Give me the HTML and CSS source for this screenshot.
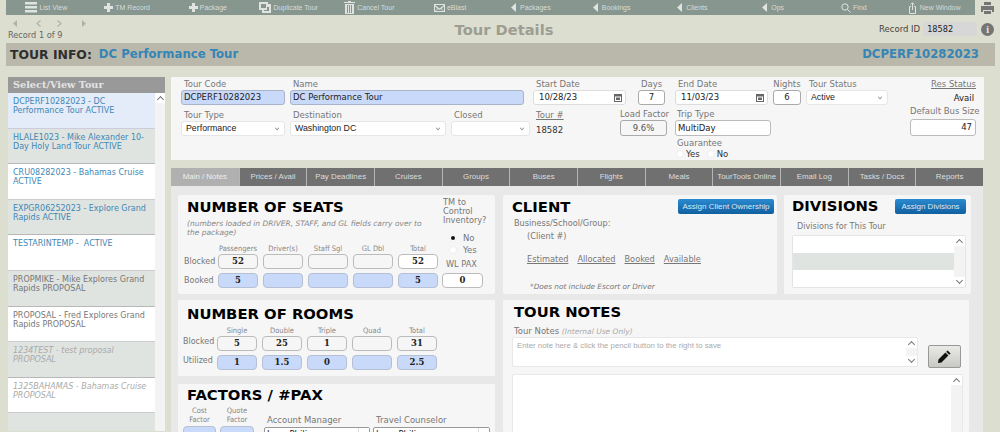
FILE: index.html
```html
<!DOCTYPE html>
<html lang="en">
<head>
<meta charset="utf-8">
<title>Tour Details</title>
<link rel="stylesheet" href="styles.css">
</head>
<body>
<div class="page">
  <div class="topstrip">
    <nav class="toolbar">
      <span class="tool"><svg class="ti" width="12" height="11" viewBox="0 0 12 11"><path d="M0 0h12v2.500H0zM0 4h12v2.500H0zM0 8h12v2.500H0z"/></svg>List View</span>
      <span class="tool"><svg class="ti" width="9" height="9" viewBox="0 0 9 9"><path d="M3 0h3v3h3v3H6v3H3V6H0V3h3z"/></svg>TM Record</span>
      <span class="tool"><svg class="ti" width="9" height="9" viewBox="0 0 9 9"><path d="M3 0h3v3h3v3H6v3H3V6H0V3h3z"/></svg>Package</span>
      <span class="tool"><svg class="ti" width="12" height="11" viewBox="0 0 12 11"><path d="M0 0h9v2h3v9H3V8H0zM2 2v4h5V2zM5 6v3h5V5H8v3H5z" fill-rule="evenodd"/></svg>Duplicate Tour</span>
      <span class="tool"><svg class="ti" width="11" height="13" viewBox="0 0 11 13"><path d="M4 0h3v1h4v1H0V1h4zM1 3h9v10H1zM3 4v8h1V4zM5 4v8h1V4zM7 4v8h1V4z" fill-rule="evenodd"/></svg>Cancel Tour</span>
      <span class="tool"><svg class="ti" width="11" height="8" viewBox="0 0 11 8"><path d="M0 0h11v8H0zM1 1l4.500 3.500L10 1zM1 2.500V7l2.500-2.500zM10 2.500L7.500 4.500 10 7zM4.300 5L1.500 7h8L6.700 5l-1.200 .9z" fill-rule="evenodd"/></svg>eBlast</span>
      <span class="tool tool-wide"><svg class="ti" width="5" height="9" viewBox="0 0 5 9"><path d="M5 0v9L0 4.500z"/></svg>Packages</span>
      <span class="tool tool-wide"><svg class="ti" width="5" height="9" viewBox="0 0 5 9"><path d="M5 0v9L0 4.500z"/></svg>Bookings</span>
      <span class="tool tool-wide"><svg class="ti" width="5" height="9" viewBox="0 0 5 9"><path d="M5 0v9L0 4.500z"/></svg>Clients</span>
      <span class="tool tool-wide"><svg class="ti" width="5" height="9" viewBox="0 0 5 9"><path d="M5 0v9L0 4.500z"/></svg>Ops</span>
      <span class="tool"><svg class="ti ti-line" width="10" height="10" viewBox="0 0 10 10"><circle cx="4" cy="4" r="3.200"/><path d="M6.500 6.500L9.500 9.500"/></svg>Find</span>
      <span class="tool tool-wide"><svg class="ti ti-line" width="7" height="12" viewBox="0 0 7 12"><path d="M2 4.500H.5v7h6v-7H5M3.500 8V.8M1.800 2.500L3.500 .8l1.700 1.700"/></svg>New Window</span>
    </nav>
    <div class="printer"><svg width="13" height="12" viewBox="0 0 13 12"><path fill="#757575" d="M3 0h7v3H3zM0 4h13v6h-2V8H2v2H0zM3 9h7v3H3z"/></svg></div>
  </div>

  <header class="recordbar">
    <div class="recordnav">
      <div class="arrows">
        <svg width="4" height="7" viewBox="0 0 4 7"><path d="M4 0v7L0 3.500z"/></svg>
        <svg class="chev" width="5" height="7" viewBox="0 0 5 7"><path d="M4.500 .5L1 3.500l3.500 3"/></svg>
        <svg class="chev" width="5" height="7" viewBox="0 0 5 7"><path d="M.5 .5L4 3.500l-3.500 3"/></svg>
        <svg width="4" height="7" viewBox="0 0 4 7"><path d="M0 0v7l4-3.500z"/></svg>
      </div>
      <div class="reccount">Record 1 of 9</div>
    </div>
    <h1 class="pagetitle">Tour Details</h1>
    <div class="recordid">
      <span class="recid-label">Record ID</span>
      <span class="recid-val">18582</span>
      <span class="info">i</span>
    </div>
  </header>

  <div class="titlebar">
    <span class="ti-label">TOUR INFO:</span>
    <span class="ti-name">DC Performance Tour</span>
    <span class="ti-code">DCPERF10282023</span>
  </div>

  <div class="body">
    <aside class="sidebar">
      <div class="side-head">Select/View Tour</div>
      <div class="side-list">
        <ul class="tours">
          <li class="tour cur blue">DCPERF10282023 - DC Performance Tour ACTIVE</li>
          <li class="tour alt blue">HLALE1023 - Mike Alexander 10-Day Holy Land Tour ACTIVE</li>
          <li class="tour blue">CRU08282023 - Bahamas Cruise ACTIVE</li>
          <li class="tour alt blue">EXPGR06252023 - Explore Grand Rapids ACTIVE</li>
          <li class="tour blue">TESTARINTEMP - &nbsp;ACTIVE</li>
          <li class="tour alt grey">PROPMIKE - Mike Explores Grand Rapids PROPOSAL</li>
          <li class="tour grey">PROPOSAL - Fred Explores Grand Rapids PROPOSAL</li>
          <li class="tour alt faint">1234TEST - test proposal PROPOSAL</li>
          <li class="tour faint">1325BAHAMAS - Bahamas Cruise PROPOSAL</li>
          <li class="tour alt"></li>
        </ul>
        <div class="sb sb-side"><span class="sb-btn"></span></div>
      </div>
    </aside>

    <main class="main">
      <section class="info-panel">
        <div class="irow irow-1">
          <div class="f w-code"><label class="lbl ind">Tour Code</label><div class="inp req">DCPERF10282023</div></div>
          <div class="f w-name"><label class="lbl ind">Name</label><div class="inp req">DC Performance Tour</div></div>
          <div class="f w-date w-start"><label class="lbl ind">Start Date</label><div class="inp date">10/28/23<svg class="cal" width="8" height="8" viewBox="0 0 8 8"><path d="M0 0h8v8H0zM1 2.500V7h6V2.500zM2 3.500h4V6H2z" fill="#666" fill-rule="evenodd"/></svg></div></div>
          <div class="f w-days"><label class="lbl ctr">Days</label><div class="inp num">7</div></div>
          <div class="f w-date"><label class="lbl ind">End Date</label><div class="inp date">11/03/23<svg class="cal" width="8" height="8" viewBox="0 0 8 8"><path d="M0 0h8v8H0zM1 2.500V7h6V2.500zM2 3.500h4V6H2z" fill="#666" fill-rule="evenodd"/></svg></div></div>
          <div class="f w-nights"><label class="lbl ctr">Nights</label><div class="inp num">6</div></div>
          <div class="f w-status"><label class="lbl ind">Tour Status</label><div class="inp sel">Active<span class="caret"></span></div></div>
          <div class="f w-res"><span class="lbl link">Res Status</span><div class="res-val">Avail</div></div>
        </div>
        <div class="irow irow-2">
          <div class="f w-code"><label class="lbl ind">Tour Type</label><div class="inp sel">Performance<span class="caret"></span></div></div>
          <div class="f w-dest"><label class="lbl ind">Destination</label><div class="inp sel">Washington DC<span class="caret"></span></div></div>
          <div class="f w-closed"><label class="lbl ind">Closed</label><div class="inp sel"><span class="caret"></span></div></div>
          <div class="f w-tnum"><span class="lbl link">Tour #</span><div class="tnum">18582</div></div>
          <div class="f w-load"><label class="lbl ctr">Load Factor</label><div class="inp num flat">9.6%</div></div>
          <div class="f w-trip">
            <label class="lbl ind">Trip Type</label><div class="inp">MultiDay</div>
            <label class="lbl ind guar">Guarantee</label>
            <div class="radios"><span class="radio"></span>Yes<span class="radio radio-2"></span>No</div>
          </div>
          <div class="f w-bus"><label class="lbl rt">Default Bus Size</label><div class="inp rnum">47</div></div>
        </div>
      </section>

      <nav class="tabs">
        <span class="tab on">Main / Notes</span><span class="tab">Prices / Avail</span><span class="tab">Pay Deadlines</span><span class="tab">Cruises</span><span class="tab">Groups</span><span class="tab">Buses</span><span class="tab">Flights</span><span class="tab">Meals</span><span class="tab">TourTools Online</span><span class="tab">Email Log</span><span class="tab">Tasks / Docs</span><span class="tab">Reports</span>
      </nav>

      <div class="content">
        <div class="col-left">
          <section class="card seats">
            <div class="seats-top">
              <div class="seats-intro">
                <h2 class="h">NUMBER OF SEATS</h2>
                <p class="note">(numbers loaded in DRIVER, STAFF, and GL fields carry over to the package)</p>
              </div>
              <div class="tm">TM to Control Inventory?</div>
            </div>
            <div class="seat-lower">
              <div class="matrix">
                <span></span><span class="ch">Passengers</span><span class="ch">Driver(s)</span><span class="ch">Staff Sgl</span><span class="ch">GL Dbl</span><span class="ch">Total</span>
                <span class="rh">Blocked</span><span class="box">52</span><span class="box"></span><span class="box"></span><span class="box"></span><span class="box white">52</span>
                <span class="rh">Booked</span><span class="box fill">5</span><span class="box fill"></span><span class="box fill"></span><span class="box fill"></span><span class="box fill">5</span>
              </div>
              <div class="tmside">
                <div class="rad-line"><span class="radio sel-r"></span>No</div>
                <div class="rad-line"><span class="radio"></span>Yes</div>
                <div class="wl">WL PAX</div>
                <span class="box white wlbox">0</span>
              </div>
            </div>
          </section>

          <section class="card rooms">
            <h2 class="h">NUMBER OF ROOMS</h2>
            <div class="matrix matrix-rooms">
              <span></span><span class="ch">Single</span><span class="ch">Double</span><span class="ch">Triple</span><span class="ch">Quad</span><span class="ch">Total</span>
              <span class="rh">Blocked</span><span class="box">5</span><span class="box">25</span><span class="box">1</span><span class="box"></span><span class="box">31</span>
              <span class="rh">Utilized</span><span class="box fill">1</span><span class="box fill">1.5</span><span class="box fill">0</span><span class="box fill"></span><span class="box fill">2.5</span>
            </div>
          </section>

          <section class="card factors">
            <h2 class="h">FACTORS / #PAX</h2>
            <div class="fact-row">
              <div class="fact"><span class="ch2">Cost Factor</span><span class="box fill fbox"></span></div>
              <div class="fact fact-2"><span class="ch2">Quote Factor</span><span class="box fill fbox"></span></div>
              <div class="staff staff-am"><label class="lbl ind">Account Manager</label><div class="inp staffsel">Lynn Philips<span class="sbtn"></span></div></div>
              <div class="staff staff-tc"><label class="lbl ind">Travel Counselor</label><div class="inp staffsel">Lynn Philips<span class="sbtn"></span></div></div>
            </div>
          </section>
        </div>

        <div class="col-right">
          <div class="top-right">
            <section class="card client">
              <div class="cl-head"><h2 class="h">CLIENT</h2><span class="btn btn-client">Assign Client Ownership</span></div>
              <div class="cl-l1">Business/School/Group:</div>
              <div class="cl-l2">(Client #)</div>
              <div class="cl-links"><span>Estimated</span><span>Allocated</span><span>Booked</span><span>Available</span></div>
              <div class="cl-note">*Does not include Escort or Driver</div>
            </section>
            <section class="card divisions">
              <div class="cl-head"><h2 class="h">DIVISIONS</h2><span class="btn btn-div">Assign Divisions</span></div>
              <div class="div-lbl">Divisions for This Tour</div>
              <div class="div-list">
                <div class="div-rows"><div class="div-row"></div><div class="div-row alt2"></div><div class="div-row"></div></div>
                <div class="sb sb-v"><span class="sb-btn"></span><span class="sb-btn dn"></span></div>
              </div>
            </section>
          </div>
          <section class="card notes">
            <h2 class="h">TOUR NOTES</h2>
            <div class="notes-lbl">Tour Notes <em>(Internal Use Only)</em></div>
            <div class="note-entry">
              <div class="note-box">
                <span class="note-ph">Enter note here &amp; click the pencil button to the right to save</span>
                <div class="sb sb-v"><span class="sb-btn"></span><span class="sb-btn dn"></span></div>
              </div>
              <span class="pencil"><svg width="13" height="13" viewBox="0 0 13 13"><path fill="#111" d="M9.600 .4l3 3-1.400 1.400-3-3zM7.400 2.600l3 3-6.900 6.900L0 13l.5-3.500z"/></svg></span>
            </div>
            <div class="note-log">
              <div class="sb sb-log"><span class="sb-btn"></span></div>
            </div>
          </section>
        </div>
      </div>
    </main>
  </div>
</div>
</body>
</html>
```

FILE: styles.css
```css
* { box-sizing: border-box; }
html, body { margin: 0; padding: 0; height: 432px; overflow: hidden; }
body { background: #dcdecf; font-family: "DejaVu Sans", Verdana, sans-serif; font-size: 9px; color: #333; }
.page { width: 1000px; height: 432px; overflow: hidden; }

/* top toolbar */
.topstrip { display: flex; height: 15px; padding-left: 6px; }
.toolbar { width: 969px; background: #87968f; display: grid; grid-template-columns: repeat(12, 1fr); }
.tool { display: flex; align-items: center; justify-content: center; gap: 2px; color: #d5dcd8; font-family: "Liberation Sans", Arial, sans-serif; font-size: 7px; white-space: nowrap; }
.tool-wide { gap: 4px; }
.ti { fill: #dfe4e0; flex: none; }
.ti-line { fill: none; stroke: #dfe4e0; stroke-width: 1; }
.printer { width: 25px; display: flex; align-items: center; justify-content: center; }

/* record row */
.recordbar { height: 28px; display: flex; align-items: flex-start; }
.recordnav { width: 120px; padding-left: 8px; }
.arrows { display: flex; padding: 5px 0 0 5px; height: 14px; }
.arrows svg { fill: #b0b2a6; margin-right: 19px; flex: none; }
.arrows .chev { fill: none; stroke: #b0b2a6; stroke-width: 1.200; margin-right: 16px; }
.arrows .chev + .chev { margin-right: 20px; }
.reccount { color: #666; font-size: 8.200px; line-height: 12px; }
.pagetitle { flex: 1; margin: 6px 0 0; text-align: center; color: #9d9d92; font-size: 14.700px; line-height: 18px; font-weight: bold; padding-left: 9px; }
.recordid { display: flex; align-items: center; width: 121px; margin-top: 7px; height: 14px; }
.recid-label { color: #444; font-size: 8.500px; margin-right: 3px; white-space: nowrap; }
.recid-val { width: 54px; height: 14px; background: #d7d7d7; border-radius: 2px; font-size: 8.200px; color: #222; padding: 2px 4px; line-height: 11px; margin-right: 4px; flex: none; }
.info { width: 13px; height: 13px; border-radius: 50%; background: #757575; color: #e8e8e0; font: bold 10px/13px "Liberation Serif", serif; text-align: center; flex: none; }

/* title bar */
.titlebar { margin-left: 6px; width: 989px; height: 23px; background: #b9b8aa; display: flex; align-items: center; padding: 0 4px 1px; font-weight: bold; font-size: 11.700px; }
.ti-label { color: #2e2e2e; margin-right: 7px; font-size: 12.400px; }
.ti-name { color: #3585b5; }
.ti-code { color: #3585b5; margin-left: auto; margin-right: 12px; }

/* body */
.body { display: flex; padding: 11px 0 0 8px; }
.sidebar { width: 157px; flex: none; margin-right: 6px; }
.side-head { height: 16px; background: #999; color: #e4e4e4; font-family: "DejaVu Serif", serif; font-weight: bold; font-size: 9.700px; line-height: 16px; padding-left: 5px; }
.side-list { display: flex; height: 338px; overflow: hidden; }
.tours { list-style: none; margin: 0; padding: 0; width: 147px; flex: none; }
.tour { height: 35.600px; padding: 4px 4px 0 5px; font-size: 8px; line-height: 9px; background: #fff; border-bottom: 1px solid #ccc; }
.tour.alt { background: #dfe4e1; border-bottom-color: #b8b8b8; }
.tour.cur { background: #e3ecf8; border-bottom-color: #ccd; }
.blue { color: #3f87b5; }
.grey { color: #777; }
.faint { color: #aaa; font-style: italic; }
.sb { background: #f3f3f3; flex: none; display: flex; flex-direction: column; justify-content: space-between; }
.sb-side { width: 10px; justify-content: flex-start; }
.sb-btn { height: 10px; background: #fff; display: flex; justify-content: center; align-items: center; }
.sb-btn::before { content: ""; width: 4px; height: 4px; border-left: 1px solid #777; border-top: 1px solid #777; transform: translateY(1px) rotate(45deg); }
.sb-btn.dn { transform: scaleY(-1); }

.main { width: 813px; flex: none; }

/* info panel */
.info-panel { height: 83px; background: #f6f6f6; padding: 2px 8px 0 10px; width: 813px; }
.irow { display: flex; align-items: flex-start; }
.irow-1 { height: 32px; }
.f { flex: none; }
.lbl { display: block; color: #777; font-size: 8.500px; line-height: 11px; white-space: nowrap; }
.lbl.ind { padding-left: 3px; }
.lbl.ctr { text-align: center; }
.lbl.rt { text-align: right; }
.lbl.link { text-decoration: underline; }
.inp { display: block; height: 15px; background: #fff; border: 1px solid #ccc; border-radius: 3px; font-size: 8.500px; line-height: 13px; color: #222; padding: 0 2px; position: relative; white-space: nowrap; overflow: hidden; }
.inp.req { background: #c9d9fa; border-color: #a9b4c8; }
.inp.sel { border-color: #e6e6e6; font-family: "Liberation Sans", Arial, sans-serif; font-size: 8.800px; padding-left: 4px; }
.caret { position: absolute; right: 5px; top: 4px; width: 4px; height: 4px; border-right: 1px solid #888; border-bottom: 1px solid #888; transform: rotate(45deg) scale(.8); }
.inp.date { padding-left: 5px; border-color: #ddd; }
.cal { position: absolute; right: 3px; top: 3px; }
.inp.num { text-align: center; border-color: #aaa; }
.inp.flat { height: 16px; background: #f6f6f6; color: #555; line-height: 14px; }
.inp.rnum { text-align: right; height: 17px; border-color: #bbb; line-height: 15px; padding-right: 3px; }

.w-code { width: 104px; margin-right: 5px; }
.w-name { width: 234px; margin-right: 9px; }
.w-date { width: 93px; }
.w-start { margin-right: 12px; }
.w-days { width: 27px; margin-right: 10px; }
.w-nights { width: 28px; margin: 0 5px; }
.w-status { width: 82px; }
.w-res { margin-left: auto; text-align: right; width: 70px; }
.res-val { color: #222; font-size: 8.500px; padding-top: 3px; padding-right: 2px; }
.irow-2 { height: 49px; margin-top: -1px; }
.w-dest { width: 156px; margin-right: 5px; }
.w-closed { width: 79px; margin-right: 6px; }
.w-tnum { width: 84px; }
.tnum { color: #333; font-size: 8.500px; padding-top: 4px; }
.w-load { width: 47px; margin-right: 8px; margin-top: -1px; }
.w-trip { width: 96px; margin-top: -1px; }
.w-trip .inp { height: 16px; line-height: 14px; border-color: #bbb; }
.w-trip .lbl.ind { padding-left: 2px; }
.w-bus { width: 66px; margin-left: auto; margin-top: -4px; }
.w-bus .lbl { margin-bottom: 2px; }
.guar { margin-top: 2px; }
.radios { display: flex; align-items: center; font-size: 8.500px; color: #333; padding-left: 1px; line-height: 10px; }
.radio { width: 8px; height: 8px; border-radius: 50%; background: #fff; border: 1px solid #eee; margin-right: 2px; flex: none; }
.radio-2 { margin-left: 7px; }
.sel-r { background: #111; border: 2px solid #fff; outline: 1px solid #eee; outline-offset: -1px; }

/* tabs */
.tabs { display: grid; grid-template-columns: repeat(12, 1fr); margin-top: 8px; height: 18px; width: 812px; }
.tab { background: #707070; color: #ddd; text-align: center; font-family: "Liberation Sans", Arial, sans-serif; font-size: 7.900px; line-height: 18px; border-left: 1px solid #b5b5b5; white-space: nowrap; overflow: hidden; }
.tab.on { background: #b0b0b0; color: #eee; border-left: 0; }

/* content */
.content { background: #e8e8e8; width: 812px; height: 246px; padding: 9px 0 0 7px; display: flex; gap: 8px; overflow: hidden; }
.col-left { width: 317px; flex: none; display: flex; flex-direction: column; gap: 6px; }
.col-right { width: 468px; flex: none; display: flex; flex-direction: column; gap: 6px; }
.card { background: #f6f6f6; border-radius: 2px; flex: none; }
.h { margin: 0; color: #000; font-size: 14.800px; line-height: 16px; font-weight: bold; white-space: nowrap; }

.seats { height: 99px; padding: 4px 5px 0 6px; }
.seats-top { display: flex; height: 44px; }
.seats-intro { width: 258px; padding: 0 18px 0 3px; }
.note { margin: 4px 0 0; color: #888; font-style: italic; font-size: 7.500px; line-height: 9px; }
.tm { width: 46px; padding-left: 1px; color: #777; font-size: 8.200px; line-height: 9px; margin-top: -1px; }
.seat-lower { display: flex; }
.matrix { display: grid; grid-template-columns: 29px repeat(5, 40px); column-gap: 5px; grid-template-rows: 11px 18.500px 15px; width: 254px; flex: none; }
.ch { text-align: center; color: #888; font-family: "DejaVu Sans Condensed", "DejaVu Sans", sans-serif; font-size: 7.500px; line-height: 11px; white-space: nowrap; }
.rh { color: #777; font-size: 8px; line-height: 15px; white-space: nowrap; }
.box { height: 15px; background: #f6f6f6; border: 1px solid #bbb; border-radius: 4px; text-align: center; color: #222; font-family: "DejaVu Serif", serif; font-weight: bold; font-size: 8.500px; line-height: 13px; display: block; }
.box.white { background: #fff; }
.box.fill { background: #c9d9fa; border-color: #b5c0d5; }
.tmside { margin-left: 4px; width: 41px; margin-top: -11px; }
.rad-line { display: flex; align-items: center; padding-left: 7px; color: #777; font-size: 8.500px; height: 12px; }
.rad-line .radio { margin-right: 6px; }
.wl { color: #777; font-size: 8.200px; line-height: 11px; margin-top: 2.500px; padding-left: 4px; white-space: nowrap; }
.wlbox { margin-top: 3px; }

.rooms { height: 76px; padding: 6px 5px 0 5px; }
.rooms .h { padding-left: 4px; }
.matrix-rooms { margin-top: 3px; grid-template-rows: 11px 19px 15px; }
.matrix-rooms .rh { line-height: 12px; }

.factors { height: 60px; padding: 3px 5px 0 5px; margin-top: 2px; }
.factors .h { padding-left: 4px; }
.fact-row { display: flex; margin-top: 3px; }
.fact { width: 33px; flex: none; display: flex; flex-direction: column; align-items: stretch; }
.fact-2 { width: 34px; margin-left: 4px; }
.ch2 { color: #888; font-family: "DejaVu Sans Condensed", "DejaVu Sans", sans-serif; font-size: 7.500px; line-height: 9px; text-align: center; height: 20px; }
.fbox { height: 15px; width: 100%; }
.staff { flex: none; padding-top: 9px; }
.staff-am { width: 106px; margin-left: 10px; }
.staff-tc { width: 117px; margin-left: 3px; }
.staffsel { height: 15px; border-color: #999; border-radius: 2px; margin-top: 1px; }
.sbtn { position: absolute; right: 0; top: 0; bottom: 0; width: 11px; border-left: 1px solid #ddd; background: #fff; }

.top-right { display: flex; gap: 7px; }
.client { width: 274px; height: 99px; padding: 4px 3px 0 9px; }
.cl-head { display: flex; justify-content: space-between; align-items: flex-start; }
.btn { display: block; height: 15px; border-radius: 2px; background: linear-gradient(#2a8ad0, #11609f); color: #dbe9f4; font-family: "Liberation Sans", Arial, sans-serif; font-size: 8px; line-height: 15px; text-align: center; white-space: nowrap; }
.btn-client { width: 96px; }
.btn-div { width: 71px; margin-top: 1px; }
.cl-l1 { color: #777; font-size: 8.200px; line-height: 11px; margin: 3px 0 0 2px; }
.cl-l2 { color: #777; font-size: 8.200px; line-height: 11px; margin: 2px 0 0 15px; }
.cl-links { display: flex; gap: 9px; color: #777; font-size: 8.200px; line-height: 11px; margin: 12px 0 0 15px; text-decoration: underline; }
.cl-note { color: #777; font-style: italic; font-size: 7.300px; line-height: 10px; margin: 17px 0 0 18px; }
.divisions { width: 187px; height: 99px; padding: 3px 5px 0 8px; }
.div-lbl { color: #777; font-size: 8.100px; line-height: 11px; margin: 7px 0 0 5px; }
.div-list { display: flex; border: 1px solid #e4e4e4; margin: 3px 0 0 0; height: 53px; border-radius: 2px; background: #fff; }
.div-rows { flex: 1; }
.div-row { height: 17px; background: #fff; }
.div-row.alt2 { background: #dfe4e1; }
.sb-v { width: 11px; }

.notes { width: 466px; height: 132px; padding: 4px 7px 0 11px; }
.notes-lbl { color: #777; font-size: 8.500px; line-height: 11px; margin-top: 6px; }
.notes-lbl em { color: #aaa; font-size: 7.500px; }
.note-entry { display: flex; align-items: flex-end; margin-left: -2px; }
.note-box { display: flex; width: 406px; height: 30px; background: #fff; border: 1px solid #e8e8e8; border-radius: 2px; flex: none; }
.note-ph { flex: 1; padding: 3px 4px; color: #aaa; font-family: "Liberation Sans", Arial, sans-serif; font-size: 7.800px; line-height: 10px; }
.pencil { width: 33px; height: 23px; margin-left: 10px; margin-bottom: -1px; border: 1px solid #999; border-radius: 2px; background: linear-gradient(#eaeae6, #c8c8c4); display: flex; align-items: center; justify-content: center; flex: none; }
.note-log { display: flex; justify-content: flex-end; margin: 7px 0 0 -2px; width: 451px; height: 80px; background: #fff; border: 1px solid #e8e8e8; border-radius: 2px; }
.sb-log { width: 11px; }
```
